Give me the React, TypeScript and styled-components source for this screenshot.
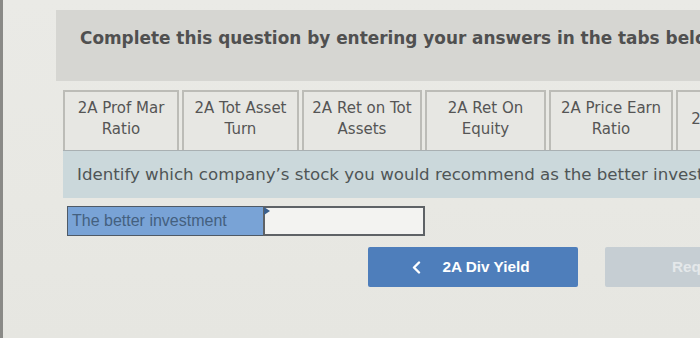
import React from "react";
import styled, { createGlobalStyle } from "styled-components";

const Global = createGlobalStyle`
  html, body { margin: 0; padding: 0; }
  body { background: #e9e9e5; }
`;

const Page = styled.div`
  width: 700px;
  height: 338px;
  box-sizing: border-box;
  overflow: hidden;
  background: linear-gradient(180deg, #eaeae6 0%, #e8e8e3 60%, #e6e6e1 100%);
  border-left: 3px solid #8a8a87;
  padding-top: 10px;
`;

const Header = styled.div`
  margin-left: 53px;
  height: 71px;
  box-sizing: border-box;
  padding: 18px 0 0 24px;
  background: #d6d6d2;
  font-family: "DejaVu Sans", Verdana, sans-serif;
  font-weight: bold;
  font-size: 16.9px;
  line-height: 20px;
  color: #505050;
  white-space: nowrap;
`;

const Content = styled.div`
  margin-left: 60px;
  width: 760px;
`;

const Tabs = styled.div`
  display: flex;
  gap: 3px;
  margin-top: 9px;
  height: 60px;
`;

const Tab = styled.div<{ $w: number }>`
  width: ${(p) => p.$w}px;
  flex: none;
  box-sizing: border-box;
  border: 2px solid #bcbcb7;
  border-bottom: none;
  background: #e7e7e3;
  display: flex;
  align-items: center;
  justify-content: center;
  text-align: center;
  padding-bottom: 4px;
  font-family: "DejaVu Sans", Verdana, sans-serif;
  font-size: 15px;
  line-height: 21px;
  color: #555555;
  white-space: nowrap;
`;

const Band = styled.div`
  height: 48px;
  box-sizing: border-box;
  background: #cbd8db;
  border-top: 1px solid #a9b0b2;
  padding-left: 14px;
  display: flex;
  align-items: center;
  font-family: "DejaVu Sans", Verdana, sans-serif;
  font-size: 16.65px;
  color: #4f5556;
  white-space: nowrap;
`;

const AnswerRow = styled.div`
  display: flex;
  margin: 8px 0 0 4px;
  height: 30px;
`;

const Label = styled.div`
  width: 196px;
  box-sizing: border-box;
  background: #79a3d6;
  border: 1px solid #4f5a66;
  border-right: none;
  padding-left: 4px;
  display: flex;
  align-items: center;
  font-family: "Liberation Sans", Arial, sans-serif;
  font-size: 16px;
  color: #44607f;
`;

const Input = styled.div`
  position: relative;
  width: 162px;
  box-sizing: border-box;
  background: #f3f3f1;
  border: 2px solid #5e6266;
  &::before {
    content: "";
    position: absolute;
    left: -1px;
    top: -1px;
    border-style: solid;
    border-width: 4px 0 4px 6px;
    border-color: transparent transparent transparent #3a5f8c;
  }
`;

const ButtonRow = styled.div`
  display: flex;
  gap: 27px;
  margin: 11px 0 0 305px;
`;

const NavButton = styled.div<{ $disabled?: boolean }>`
  width: ${(p) => (p.$disabled ? 130 : 210)}px;
  height: 40px;
  flex: none;
  box-sizing: border-box;
  border-radius: 2px;
  background: ${(p) => (p.$disabled ? "#c6ced3" : "#4e7ebb")};
  color: ${(p) => (p.$disabled ? "#e4e8ea" : "#ffffff")};
  display: flex;
  align-items: center;
  justify-content: ${(p) => (p.$disabled ? "flex-start" : "center")};
  padding-left: ${(p) => (p.$disabled ? "67px" : "0")};
  padding-right: ${(p) => (p.$disabled ? "0" : "4px")};
  gap: 21px;
  font-family: "Liberation Sans", Arial, sans-serif;
  font-weight: bold;
  font-size: 15.3px;
`;

const Chevron = () => (
  <svg width="9" height="13" viewBox="0 0 9 13" style={{ display: "block" }}>
    <path d="M7 1.5 L2 6.5 L7 11.5" fill="none" stroke="#ffffff" strokeWidth="2.4" strokeLinecap="round" strokeLinejoin="round" />
  </svg>
);

const tabs: { w: number; lines: string[] }[] = [
  { w: 116, lines: ["2A Prof Mar", "Ratio"] },
  { w: 117, lines: ["2A Tot Asset", "Turn"] },
  { w: 120, lines: ["2A Ret on Tot", "Assets"] },
  { w: 121, lines: ["2A Ret On", "Equity"] },
  { w: 124, lines: ["2A Price Earn", "Ratio"] },
  { w: 120, lines: ["2A Div Yield"] },
];

export default function App() {
  return (
    <>
      <Global />
      <Page>
        <Header>Complete this question by entering your answers in the tabs below.</Header>
        <Content>
          <Tabs>
            {tabs.map((t, i) => (
              <Tab key={i} $w={t.w}>
                <div>
                  {t.lines.map((l, j) => (
                    <div key={j}>{l}</div>
                  ))}
                </div>
              </Tab>
            ))}
          </Tabs>
          <Band>Identify which company’s stock you would recommend as the better investment.</Band>
          <AnswerRow>
            <Label>The better investment</Label>
            <Input />
          </AnswerRow>
          <ButtonRow>
            <NavButton>
              <Chevron />
              <span>2A Div Yield</span>
            </NavButton>
            <NavButton $disabled>Req</NavButton>
          </ButtonRow>
        </Content>
      </Page>
    </>
  );
}
